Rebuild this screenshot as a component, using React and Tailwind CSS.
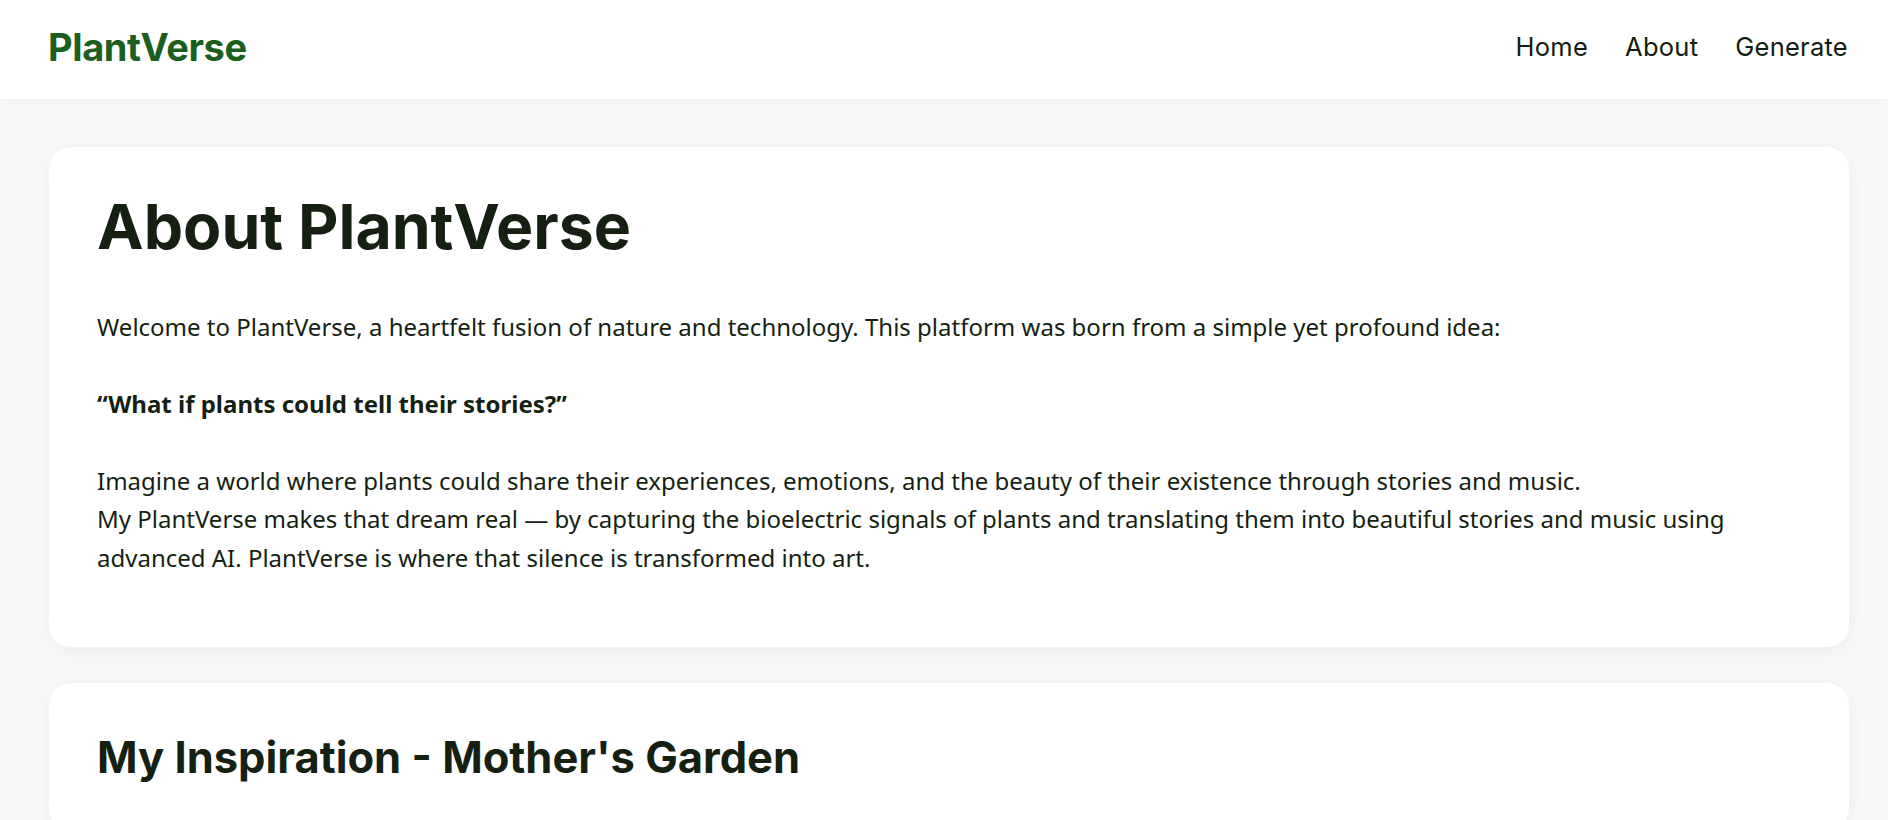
import React from "react";

const heading = { fontFamily: "Inter, 'Liberation Sans', sans-serif" };
const body = { fontFamily: "'Noto Sans', 'Liberation Sans', sans-serif" };

function NavBar() {
  return (
    <header className="h-[99px] bg-white flex items-center justify-between pl-[48px] pr-[40px] pb-[5px] shadow-[0_2px_12px_rgba(0,0,0,0.04)] relative">
      <a href="#" className="text-[38px] font-bold text-[#1b5e20] tracking-[-0.01em]" style={heading}>
        PlantVerse
      </a>
      <nav className="flex items-center gap-[37px] text-[25.5px] tracking-[0.01em] text-[#131c10]" style={heading}>
        <a href="#">Home</a>
        <a href="#">About</a>
        <a href="#">Generate</a>
      </nav>
    </header>
  );
}

export default function App() {
  return (
    <div className="min-h-screen bg-[#f7f9f6] text-[#151f12]">
      <NavBar />

      <main className="pl-[49px] pr-[39px] pt-12 pb-12 flex flex-col gap-9">
        {/* About card */}
        <section className="bg-white rounded-[22px] shadow-[0_4px_24px_rgba(0,0,0,0.05)] px-12 pt-12 pb-[70px]">
          <h1 className="text-[62.5px] leading-none font-bold mb-[50px]" style={heading}>
            About PlantVerse
          </h1>
          <div className="text-[24px] leading-[38.5px]" style={body}>
            <p className="mb-[38.5px]">
              Welcome to PlantVerse, a heartfelt fusion of nature and technology. This platform was born from a
              simple yet profound idea:
            </p>
            <p className="mb-[38.5px] font-bold">“What if plants could tell their stories?”</p>
            <p>
              Imagine a world where plants could share their experiences, emotions, and the beauty of their existence
              through stories and music.
              <br />
              My PlantVerse makes that dream real — by capturing the bioelectric signals of plants and translating them
              into beautiful stories and music using advanced AI. PlantVerse is where that silence is transformed into
              art.
            </p>
          </div>
        </section>

        {/* Inspiration card */}
        <section className="bg-white rounded-[22px] shadow-[0_4px_24px_rgba(0,0,0,0.05)] px-12 pt-12 pb-12">
          <h2 className="text-[43.5px] leading-[1.2] font-bold" style={heading}>
            My Inspiration - Mother's Garden
          </h2>
        </section>
      </main>
    </div>
  );
}
